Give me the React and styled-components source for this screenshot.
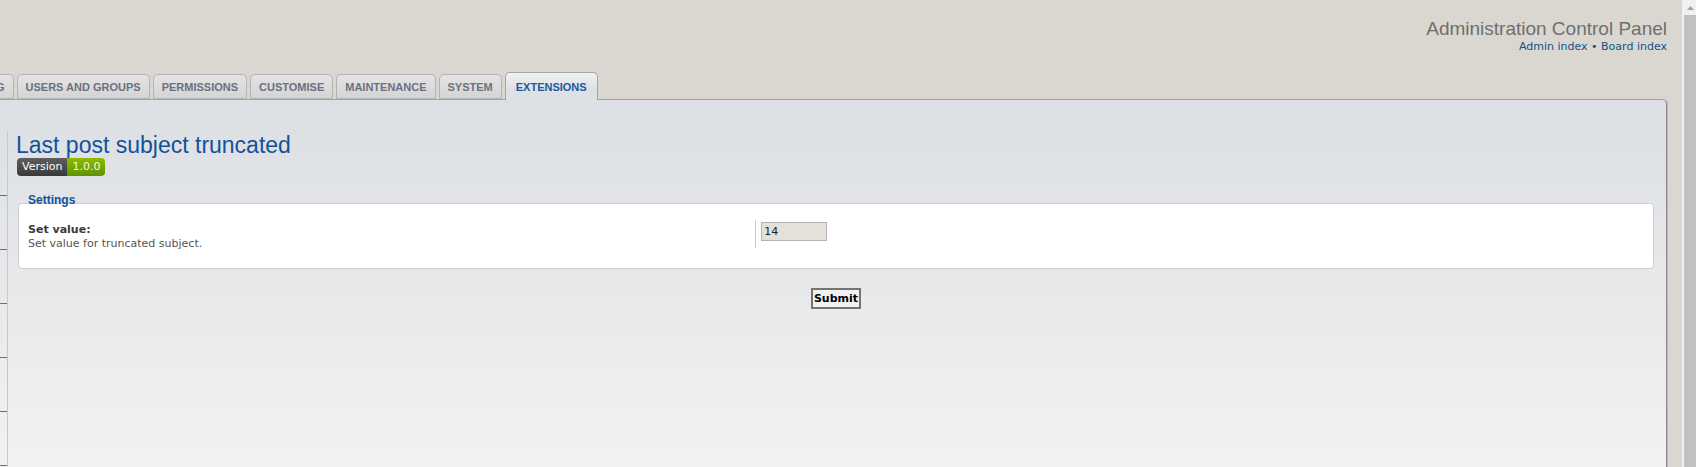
import React from "react";
import styled, { createGlobalStyle } from "styled-components";

const GlobalStyle = createGlobalStyle`
  html, body {
    margin: 0;
    padding: 0;
  }
  body {
    background: #dad7d0;
    font-family: "DejaVu Sans", Verdana, sans-serif;
    font-size: 11px;
    color: #333;
  }
`;

const Window = styled.div`
  display: flex;
  height: 467px;
  overflow: hidden;
`;

const Page = styled.div`
  flex: 1;
  min-width: 0;
  display: flex;
  flex-direction: column;
  padding-right: 15px;
  background: #dad7d0;
  overflow: hidden;
`;

const Header = styled.header`
  height: 72px;
  box-sizing: border-box;
  padding-top: 18px;
  text-align: right;
`;

const SiteTitle = styled.h1`
  margin: 0;
  font: normal 19px/22px "Liberation Sans", Arial, sans-serif;
  color: #6f6f6f;
`;

const HeaderLinks = styled.p`
  margin: 0;
  font-size: 11px;
  line-height: 14px;
  color: #105289;

  a {
    color: #105289;
    text-decoration: none;
  }
`;

/* page is scrolled sideways: the left edge of the board sits off screen */
const Scrolled = styled.div`
  flex: 1;
  display: flex;
  flex-direction: column;
  margin-left: -60px;
`;

const TabRow = styled.ul`
  list-style: none;
  margin: 0 0 -1px;
  padding: 0 0 0 6px;
  display: flex;
  align-items: flex-end;
  gap: 3px;
  position: relative;
  z-index: 1;
`;

const Tab = styled.li`
  box-sizing: border-box;
  height: ${(p) => (p.$active ? 28 : 25)}px;
  margin-bottom: ${(p) => (p.$active ? 0 : 1)}px;
  padding: 0 ${(p) => (p.$active ? 10 : 8)}px;
  display: flex;
  align-items: center;
  border: 1px solid ${(p) => (p.$active ? "#a4a4a4" : "#b3b3b3")};
  border-bottom: ${(p) => (p.$active ? "none" : "1px solid #b3b3b3")};
  border-radius: 5px 5px 0 0;
  background: ${(p) =>
    p.$active
      ? "linear-gradient(#f0f1f3, #dde0e4 60%)"
      : "linear-gradient(#e4e4e4, #d4d4d4)"};
  font: bold 11px "Liberation Sans", Arial, sans-serif;
  color: ${(p) => (p.$active ? "#1a5a9e" : "#6a7180")};
  white-space: nowrap;
`;

const Panel = styled.div`
  flex: 1;
  display: flex;
  border: 1px solid #a3a3a3;
  border-right-color: #8a8a8a;
  border-bottom: none;
  border-radius: 0 5px 0 0;
  background: linear-gradient(#dcdfe3, #f2f2f2);
  box-shadow: 1px 0 0 #bcb9b2;
`;

const Menu = styled.nav`
  flex: none;
  width: 67px;
  box-sizing: border-box;
  margin-top: 32px;
  border-right: 1px solid #c5c8cc;
`;

const MenuBlock = styled.div`
  height: ${(p) => (p.$first ? 64 : 54)}px;
  box-sizing: border-box;
  border-bottom: 1px solid #3f78b2;
`;

const Main = styled.main`
  flex: 1;
  min-width: 0;
  padding: 33px 11px 0 9px;
`;

const Title = styled.h1`
  margin: 0 0 0 -1px;
  font: normal 23px/25px "Liberation Sans", Arial, sans-serif;
  color: #13529b;
`;

const Badge = styled.div`
  display: flex;
  width: max-content;
  height: 18px;
  border-radius: 4px;
  overflow: hidden;
  font-size: 11px;
  line-height: 18px;
  color: #fff;
`;

const BadgeLabel = styled.span`
  padding: 0 5px;
  background: linear-gradient(#5e5e5e, #393939);
`;

const BadgeValue = styled.span`
  padding: 0 5px;
  background: linear-gradient(#8cbd00, #5f9200);
  color: #f4f8e6;
`;

const Fieldset = styled.section`
  margin-top: 17px;
`;

const Legend = styled.h2`
  margin: 0;
  padding-left: 11px;
  font: bold 12px/14px "Liberation Sans", Arial, sans-serif;
  color: #13529b;
`;

const Box = styled.div`
  margin: -4px 1px 0;
  padding: 16px 9px 18px;
  background: #fff;
  border: 1px solid #cfcfcf;
  border-radius: 4px;
`;

const Row = styled.dl`
  display: flex;
  align-items: flex-start;
  margin: 0;
`;

const Term = styled.dt`
  flex: none;
  width: 45%;
  padding-top: 3px;
  line-height: 13.5px;
  color: #555;

  label {
    display: block;
    font-weight: bold;
    color: #3a3a3a;
  }
`;

const Definition = styled.dd`
  margin: 0;
  padding: 2px 0 7px 5px;
  border-left: 1px solid #cccccc;
`;

const TextInput = styled.input`
  display: block;
  box-sizing: border-box;
  width: 66px;
  height: 19px;
  margin: 0;
  padding: 0 2px;
  border: 1px solid #b3b3b3;
  background: #e4e1db;
  font: 11px "DejaVu Sans", Verdana, sans-serif;
  color: #222;
`;

const Actions = styled.div`
  display: flex;
  justify-content: center;
  margin-top: 19px;
`;

const SubmitButton = styled.button`
  height: 21px;
  margin: 0;
  padding: 0 1px;
  border: 2px solid #747474;
  background: #f1f1f1;
  font: bold 11px "DejaVu Sans", Verdana, sans-serif;
  color: #000;
`;

const ScrollBar = styled.div`
  flex: none;
  width: 14px;
  box-sizing: border-box;
  padding-left: 2px;
  display: flex;
  flex-direction: column;
  background: #f1f1f1;
`;

const ScrollArrow = styled.div`
  height: 15px;
  display: flex;
  align-items: center;
  justify-content: center;
`;

const ScrollThumb = styled.div`
  flex: 1;
  background: #c1c1c1;
`;

const tabs = [
  "Posting",
  "Users and groups",
  "Permissions",
  "Customise",
  "Maintenance",
  "System",
  "Extensions",
];

const menuBlocks = [0, 1, 2, 3, 4, 5];

export default function App() {
  return (
    <>
      <GlobalStyle />
      <Window>
        <Page>
          <Header>
            <SiteTitle>Administration Control Panel</SiteTitle>
            <HeaderLinks>
              <a href="#">Admin index</a> • <a href="#">Board index</a>
            </HeaderLinks>
          </Header>

          <Scrolled>
            <TabRow>
              {tabs.map((t) => (
                <Tab key={t} $active={t === "Extensions"}>
                  {t.toUpperCase()}
                </Tab>
              ))}
            </TabRow>

            <Panel>
              <Menu>
                {menuBlocks.map((i) => (
                  <MenuBlock key={i} $first={i === 0} />
                ))}
              </Menu>

              <Main>
                <Title>Last post subject truncated</Title>
                <Badge>
                  <BadgeLabel>Version</BadgeLabel>
                  <BadgeValue>1.0.0</BadgeValue>
                </Badge>

                <Fieldset>
                  <Legend>Settings</Legend>
                  <Box>
                    <Row>
                      <Term>
                        <label htmlFor="truncate">Set value:</label>
                        Set value for truncated subject.
                      </Term>
                      <Definition>
                        <TextInput id="truncate" defaultValue="14" />
                      </Definition>
                    </Row>
                  </Box>
                </Fieldset>

                <Actions>
                  <SubmitButton>Submit</SubmitButton>
                </Actions>
              </Main>
            </Panel>
          </Scrolled>
        </Page>

        <ScrollBar>
          <ScrollArrow>
            <svg width="7" height="4" viewBox="0 0 7 4">
              <polygon points="3.5,0 7,4 0,4" fill="#a3a3a3" />
            </svg>
          </ScrollArrow>
          <ScrollThumb />
        </ScrollBar>
      </Window>
    </>
  );
}
